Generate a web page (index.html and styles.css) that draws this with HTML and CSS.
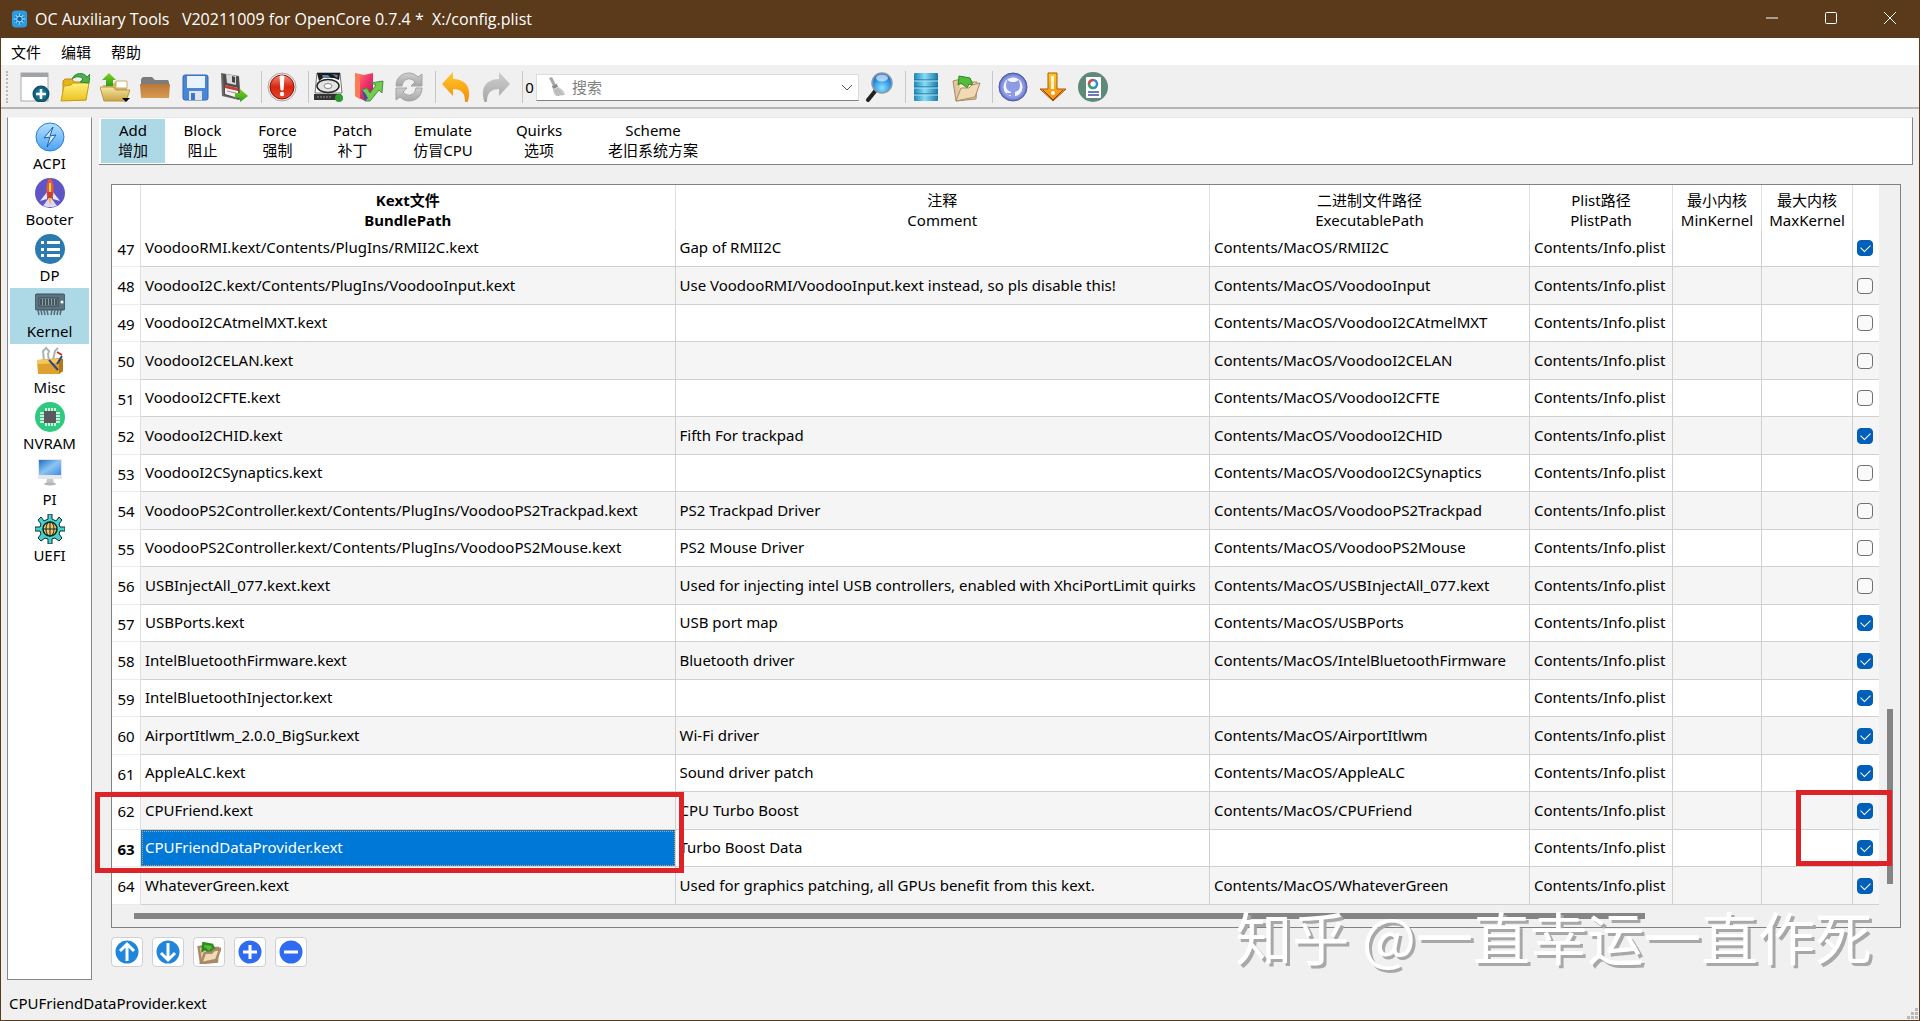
FILE: index.html
```
<!DOCTYPE html>
<html lang="zh-CN">
<head>
    <meta charset="UTF-8">
    <meta name="viewport" content="width=device-width, initial-scale=1.0">
    <title>OC Auxiliary Tools</title>
    <link rel="stylesheet" href="styles.css">
</head>
<body>
<svg class="defs" aria-hidden="true">
    <defs>
        <linearGradient id="gYellow" x1="0" y1="0" x2="0" y2="1"><stop offset="0" stop-color="#fff07a"/><stop offset="1" stop-color="#ecc11f"/></linearGradient>
        <linearGradient id="gTan" x1="0" y1="0" x2="0" y2="1"><stop offset="0" stop-color="#f6e6a4"/><stop offset="1" stop-color="#c9a444"/></linearGradient>
        <linearGradient id="gBrown" x1="0" y1="0" x2="0" y2="1"><stop offset="0" stop-color="#b9783a"/><stop offset="1" stop-color="#d99a52"/></linearGradient>
        <linearGradient id="gBlue" x1="0" y1="0" x2="0" y2="1"><stop offset="0" stop-color="#b5e0ff"/><stop offset="1" stop-color="#4aa3f5"/></linearGradient>
        <linearGradient id="gRed" x1="0" y1="0" x2="0" y2="1"><stop offset="0" stop-color="#f58a78"/><stop offset=".5" stop-color="#d9260f"/><stop offset="1" stop-color="#e8452c"/></linearGradient>
        <linearGradient id="gOrange" x1="0" y1="0" x2="0" y2="1"><stop offset="0" stop-color="#ffc928"/><stop offset="1" stop-color="#f58a0c"/></linearGradient>
        <linearGradient id="gGrey" x1="0" y1="0" x2="0" y2="1"><stop offset="0" stop-color="#cfcfcf"/><stop offset="1" stop-color="#a6a6a6"/></linearGradient>
        <linearGradient id="gDb" x1="0" y1="0" x2="1" y2="0"><stop offset="0" stop-color="#1f86b5"/><stop offset=".45" stop-color="#86dcf7"/><stop offset="1" stop-color="#1a78a8"/></linearGradient>
        <linearGradient id="gPink" x1="0" y1="0" x2="1" y2="1"><stop offset="0" stop-color="#ff8a5c"/><stop offset=".5" stop-color="#f0306c"/><stop offset="1" stop-color="#a01858"/></linearGradient>
        <linearGradient id="gGreen" x1="0" y1="0" x2="0" y2="1"><stop offset="0" stop-color="#7ed321"/><stop offset="1" stop-color="#2e9a1c"/></linearGradient>
        <linearGradient id="gScreen" x1="0" y1="0" x2="1" y2="1"><stop offset="0" stop-color="#1d6fc4"/><stop offset=".5" stop-color="#8cc4f2"/><stop offset="1" stop-color="#3d8ede"/></linearGradient>
        <radialGradient id="gTeal"><stop offset="0" stop-color="#2b9fc0"/><stop offset="1" stop-color="#0b4a66"/></radialGradient>
        <radialGradient id="gLens" cx=".5" cy=".75" r=".75"><stop offset="0" stop-color="#8be4ff"/><stop offset=".6" stop-color="#2a92e4"/><stop offset="1" stop-color="#1560b8"/></radialGradient>
        <radialGradient id="gHub"><stop offset="0" stop-color="#b4bff4"/><stop offset=".8" stop-color="#8a97e2"/><stop offset="1" stop-color="#5b66bb"/></radialGradient>
    </defs>
    <symbol id="openFolder" viewBox="0 0 30 30">
        <path d="M2 9l8-2 3 3 13 0-1 17-20 2z" fill="#e2c8a0" stroke="#a88a66"/>
        <path d="M9 13l18-2-3 10-16 7z" fill="#f6ead0"/>
        <path d="M8 4l11 2 3 7-4-1-2 4-6-5-3 2z" fill="#52bd36" stroke="#2c8a1c"/>
        <path d="M5 29l5-13 8 0 3-3 8-2-5 14z" fill="#f0dab6" stroke="#a88a66"/>
    </symbol>
</svg>

<div class="window">
    <header class="titlebar">
        <svg class="app-icon" viewBox="0 0 18 18"><rect x="1" y="0" width="16" height="18" rx="4" fill="#2c9be0"/><circle cx="9" cy="9" r="5" fill="#1273b8"/><path d="M9 3v12M3 9h12M5 5l8 8M13 5l-8 8" stroke="#7fd4ff" stroke-width="1.5"/><circle cx="9" cy="9" r="3" fill="#0f62a8" stroke="#a8e4ff"/></svg>
        <h1 class="title">OC Auxiliary Tools &nbsp; V20211009 for OpenCore 0.7.4 *&nbsp; X:/config.plist</h1>
        <div class="window-controls">
            <button type="button" aria-label="最小化"><svg viewBox="0 0 14 14"><path d="M1 7h12"/></svg></button>
            <button type="button" aria-label="最大化"><svg viewBox="0 0 14 14"><rect x="1.500" y="1.500" width="11" height="11" rx="1"/></svg></button>
            <button type="button" aria-label="关闭"><svg viewBox="0 0 14 14"><path d="M1 1l12 12M13 1L1 13"/></svg></button>
        </div>
    </header>

    <nav class="menubar">
        <button type="button">文件</button>
        <button type="button">编辑</button>
        <button type="button">帮助</button>
    </nav>

    <div class="toolbar">
        <span class="grip"></span>
        <button type="button" aria-label="新建"><svg viewBox="0 0 30 30"><rect x="1" y="1" width="27" height="28" fill="#fff" stroke="#a9a9a9"/><path d="M1 1h27v4H1z" fill="#a0a4a8"/><circle cx="21" cy="22" r="8.500" fill="url(#gTeal)"/><path d="M21 17v10M16 22h10" stroke="#fff" stroke-width="2.500"/></svg></button>
        <button type="button" aria-label="打开"><svg viewBox="0 0 30 30"><path d="M3 28V9l2-2h7l2 3h12v18z" fill="#e2b51d" stroke="#b98d10"/><path d="M1 29l3-15 7-1 2-2h16l-3 17z" fill="url(#gYellow)" stroke="#c79c16"/><path d="M12 7c3-7 12-7 15-2l3-3-1 9-9-1 3-3c-3-3-7-3-11 0z" fill="#49b04a" stroke="#2c8a3a"/></svg></button>
        <button type="button" aria-label="最近打开"><svg viewBox="0 0 30 30"><path d="M3 26V13h9l3-3h12v16z" fill="#d8b45a"/><path d="M16 9h11v7H16z" fill="#fff" stroke="#c9b070"/><path d="M0 15h13l3 3h14l-4 11H4z" fill="url(#gTan)" stroke="#b9963e"/><path d="M9 1l7 7h-3v6H6V8H2z" fill="url(#gGreen)"/><path d="M22 26h8l-4 4z" fill="#000"/></svg></button>
        <button type="button" aria-label="目录"><svg viewBox="0 0 30 30"><path d="M1 24V7l2-2h9l3 3h13l1 2v14z" fill="#7c7c7c"/><path d="M0 12h30l-1 14H1z" fill="url(#gBrown)"/></svg></button>
        <button type="button" aria-label="保存"><svg viewBox="0 0 30 30"><rect x="3" y="3" width="25" height="25" rx="2" fill="#4a86d8" stroke="#2f66b8"/><path d="M7 4h18v12H7z" fill="#eaf3fd"/><path d="M9 19h13v9H9z" fill="#dfe4ea"/><path d="M11 21h4v7h-4z" fill="#3b76c8"/></svg></button>
        <button type="button" aria-label="另存为"><svg viewBox="0 0 30 30"><path d="M1 1l18 3 2 23-2 1L2 24z" fill="#6a6a6a"/><path d="M3 2l16 3v22L4 23z" fill="#4e4e4e"/><path d="M6 2l10 2v9L7 11z" fill="#dadada"/><path d="M12 4l3 1v6l-3-1z" fill="#444"/><path d="M5 13l13 3v10L5 22z" fill="#f4f0f0"/><path d="M5 13l13 3v3L5 16z" fill="#c93a34"/><path d="M7 19l9 2" stroke="#999"/><path d="M15 21h5v-4l8 7-8 6v-4h-5z" fill="url(#gGreen)"/></svg></button>
        <span class="separator"></span>
        <button type="button" aria-label="检查"><svg viewBox="0 0 30 30"><circle cx="15" cy="15" r="14" fill="#e8e4e4" stroke="#b5a8a8"/><circle cx="15" cy="15" r="12" fill="url(#gRed)" stroke="#8a1408"/><path d="M13 4h4l-1 14h-2z" fill="#fff" stroke="#fff"/><circle cx="15" cy="22" r="2.200" fill="#fff"/></svg></button>
        <span class="separator"></span>
        <button type="button" aria-label="挂载 ESP"><svg viewBox="0 0 30 30"><path d="M3 1h23l2 20H1z" fill="#fafafa" stroke="#777"/><path d="M3 1h23l-1 7-5-2-11 0-4 3z" fill="#1c1c1c"/><path d="M8 3h6l3 3h-8zM18 2l6 1-1 3z" fill="#5f86a8"/><ellipse cx="14" cy="14" rx="11" ry="6.500" fill="#e4e4e4" stroke="#222" stroke-width="1.500"/><ellipse cx="14" cy="14" rx="4" ry="2.500" fill="#fff" stroke="#888"/><path d="M0 22h27v6H0z" fill="#333"/><path d="M3 25h2m1 0h2m1 0h2m1 0h2m1 0h2" stroke="#999"/><circle cx="25" cy="26" r="4" fill="#2e9a2e"/></svg></button>
        <button type="button" aria-label="校验"><svg viewBox="0 0 30 30"><path d="M1 1l9 2 9-2v24l-8 4L1 24z" fill="url(#gPink)"/><path d="M1 1l5 2v24l-5-3z" fill="#ff7a58"/><path d="M11 29l-3-11 5-2 3 5 6-8-5-2 12-2-1 12-3-3-9 11z" fill="#6fcf4a" stroke="#4a8a4a"/><path d="M11 29l-3-11 3 3 3 5z" fill="#5a3cae"/></svg></button>
        <button type="button" aria-label="刷新"><svg viewBox="0 0 30 30"><path d="M5 14H2C2 5 9 1 15 1c4 0 7 2 9 4l4-3v12H17l4-4c-5-6-12-3-13 4z" fill="url(#gGrey)" stroke="#a4a4a4"/><path d="M25 16h3c0 9-7 13-13 13-4 0-7-2-9-4l-4 3V16h11l-4 4c5 6 12 3 13-4z" fill="url(#gGrey)" stroke="#a4a4a4"/></svg></button>
        <span class="separator"></span>
        <button type="button" aria-label="撤销"><svg viewBox="0 0 30 30"><path d="M1 12L12 0v7c12 0 19 8 15 22-1 2-3 2-3 0 0-8-4-12-12-12v7z" fill="url(#gOrange)"/></svg></button>
        <button type="button" aria-label="重做" disabled><svg viewBox="0 0 30 30"><path d="M29 12L18 0v7C6 7-1 15 3 29c1 2 3 2 3 0 0-8 4-12 12-12v7z" fill="url(#gGrey)"/></svg></button>
        <span class="separator"></span>
        <span class="count">0</span>
        <div class="search">
            <svg class="broom" viewBox="0 0 20 20"><path d="M3 1l3-1 4 8-3 1z" fill="#a8a8a8"/><path d="M6 9l5-2 1 3-5 2z" fill="#8a8a8a"/><path d="M7 12l5-2c4 2 6 4 7 8l-9 1c-2-2-3-4-3-7z" fill="#c6c6c6"/><path d="M9 13l4 6M11 12l5 6" stroke="#aaa"/></svg>
            <input type="text" placeholder="搜索" aria-label="搜索">
            <button type="button" class="drop" aria-label="历史"><svg viewBox="0 0 12 12"><path d="M1 4l5 5 5-5" fill="none" stroke="#555"/></svg></button>
        </div>
        <button type="button" aria-label="查找"><svg viewBox="0 0 30 30"><path d="M12 18L4 28" stroke="#222" stroke-width="4" stroke-linecap="round"/><circle cx="18" cy="11" r="10" fill="url(#gLens)" stroke="#8a98a8" stroke-width="1.500"/><ellipse cx="18" cy="6" rx="6" ry="3.500" fill="#fff" opacity=".6"/></svg></button>
        <span class="separator"></span>
        <button type="button" aria-label="数据库"><svg viewBox="0 0 30 30"><rect x="3" y="1" width="24" height="28" rx="1" fill="url(#gDb)"/><path d="M3 8h24M3 15h24M3 22h24" stroke="#15648c"/><path d="M3 9h24M3 16h24M3 23h24" stroke="#a8e8fb"/></svg></button>
        <button type="button" aria-label="导出"><svg viewBox="0 0 30 30"><use href="#openFolder"/></svg></button>
        <span class="separator"></span>
        <button type="button" aria-label="GitHub"><svg viewBox="0 0 30 30"><circle cx="15" cy="15" r="14" fill="url(#gHub)" stroke="#4f5aa8"/><circle cx="15" cy="15" r="9.500" fill="#f4f6ff"/><path d="M9 8l4 2h4l4-2 1 5c0 5-2 6-5 7v6h-4v-3c-3 1-4-1-5-2l3 0 2 0v-1c-3-1-5-3-5-7z" fill="#8e9be6"/></svg></button>
        <button type="button" aria-label="更新"><svg viewBox="0 0 30 30"><path d="M10 1h9v16h9L15 29 2 17h8z" fill="url(#gOrange)" stroke="#a85a08"/><path d="M13 4h3v13h-3z" fill="#fff6d0"/><path d="M5 18l10 10 10-10" fill="none" stroke="#8a4608"/><circle cx="15" cy="21" r="2" fill="#fff"/></svg></button>
        <button type="button" aria-label="报告"><svg viewBox="0 0 30 30"><circle cx="15" cy="15" r="15" fill="#5f8a78"/><rect x="8" y="5" width="15" height="21" rx="1" fill="#fff"/><circle cx="15" cy="12" r="4" fill="none" stroke="#2f8ad0" stroke-width="2.500"/><path d="M11 12a4 4 0 0 1 4-4" fill="none" stroke="#e0483c" stroke-width="2.500"/><path d="M15 16a4 4 0 0 1-4-4" fill="none" stroke="#38a860" stroke-width="2.500"/><path d="M10 20h11M10 23h11" stroke="#3c50a0" stroke-width="1.500"/></svg></button>
    </div>

    <main class="main">
        <nav class="sidebar">
            <button type="button"><svg viewBox="0 0 30 30"><circle cx="15" cy="15" r="14" fill="url(#gBlue)" stroke="#2b7fd0"/><path d="M18 5l-9 11 6-1-3 10 9-12-6 1z" fill="#d8eeff" stroke="#1c5fa8"/></svg>ACPI</button>
            <button type="button"><svg viewBox="0 0 30 30"><circle cx="15" cy="15" r="15" fill="#5f55c4"/><path d="M12 14l-7 9 7-2zM18 14l7 9-7-2z" fill="#e8eaf6"/><path d="M15 0c4 4 4 10 3 19h-6c-1-9-1-15 3-19z" fill="#ea5b3a"/><path d="M12 14h6l-1 6h-4z" fill="#c9402c"/><path d="M15 5v9" stroke="#ffd54f" stroke-width="2"/><path d="M8 28l5-7h4l5 7-4 1h-6z" fill="#dcd8f4"/><path d="M13 20h4l-2 7z" fill="#ffb74d"/></svg>Booter</button>
            <button type="button"><svg viewBox="0 0 30 30"><circle cx="15" cy="15" r="15" fill="#2c7bb0"/><path d="M6 7h3v3H6zM12 7h13v3H12zM6 14h3v3H6zM12 14h13v3H12zM6 20h3v3H6zM12 20h13v3H12z" fill="#fff"/></svg>DP</button>
            <button type="button" class="active"><svg viewBox="0 0 30 30"><rect x="0" y="4" width="30" height="16" rx="2" fill="#5c7480" stroke="#3a4c56"/><rect x="4" y="8" width="19" height="8" fill="#8fa4ae" stroke="#33444c"/><path d="M6 9v6m3-6v6m3-6v6m3-6v6m3-6v6m3-6v6" stroke="#2a383f" stroke-width="1.500"/><circle cx="27" cy="12" r="1.500" fill="#fff"/><path d="M3 20l1 5m2-5l1 5m2-5l1 5m2-5l1 5m4-5l-1 5m4-5l-1 5m4-5l-1 5m4-5l-1 5" stroke="#566a74" stroke-width="1.500"/></svg>Kernel</button>
            <button type="button"><svg viewBox="0 0 30 30"><path d="M9 15L8 5l3-3 3 3-1 3 1 7M18 14l2-9 3-3" fill="none" stroke="#a8b4b4" stroke-width="2"/><path d="M2 14l22-2 4 1v12l-4 3H3z" fill="#e0a030"/><path d="M2 14l22-1v4L2 18z" fill="#f5ca5c"/><path d="M24 12l4 1v12l-4 3z" fill="#b87818"/><path d="M14 14l9 10M27 10l-5 8" stroke="#274a80" stroke-width="2"/><path d="M22 6l5 3" stroke="#c03020" stroke-width="2"/></svg>Misc</button>
            <button type="button"><svg viewBox="0 0 30 30"><circle cx="15" cy="15" r="15" fill="#2fc980"/><path d="M11 6v18m3-18v18m3-18v18m3-18v18M5 11h20M5 14h20M5 17h20M5 20h20" stroke="#fff" stroke-width="1.500"/><rect x="9" y="9" width="12" height="12" fill="#5a5a5e"/></svg>NVRAM</button>
            <button type="button"><svg viewBox="0 0 30 30"><path d="M3 1h24v20H3z" fill="#e4e8ec"/><path d="M4 2h22v15H4z" fill="url(#gScreen)"/><path d="M12 21h6l1 4h-8z" fill="#c4c8cc"/><ellipse cx="15" cy="26" rx="6" ry="1.500" fill="#b0b4b8"/></svg>PI</button>
            <button type="button"><svg viewBox="0 0 30 30"><path d="M13 0h4v5l4 2 3-4 3 3-3 4 1 3h5v4h-5l-1 3 3 4-3 3-4-3-3 1v5h-4v-5l-3-1-4 3-3-3 3-4-1-3H0v-4h5l1-3-3-4 3-3 3 4 4-2z" fill="#45d3cc" stroke="#15282c"/><circle cx="15" cy="15" r="7" fill="#f4c860" stroke="#15282c" stroke-width="1.500"/><path d="M15 8v14M8 15h14" stroke="#15282c"/><ellipse cx="15" cy="15" rx="4" ry="7" fill="none" stroke="#15282c"/></svg>UEFI</button>
        </nav>

        <section class="content">
            <div class="tabs">
                <button type="button" class="active">Add<br>增加</button>
                <button type="button">Block<br>阻止</button>
                <button type="button">Force<br>强制</button>
                <button type="button">Patch<br>补丁</button>
                <button type="button" class="wide">Emulate<br>仿冒CPU</button>
                <button type="button" class="medium">Quirks<br>选项</button>
                <button type="button" class="wider">Scheme<br>老旧系统方案</button>
            </div>

            <div class="panel">
                <div class="frame">
                    <table class="kexts">
                        <colgroup>
                            <col class="c-num"><col><col><col class="c-exec"><col class="c-plist"><col class="c-min"><col class="c-max"><col class="c-check">
                        </colgroup>
                        <thead>
                            <tr>
                                <th></th>
                                <th class="sorted">Kext文件<br>BundlePath</th>
                                <th>注释<br>Comment</th>
                                <th>二进制文件路径<br>ExecutablePath</th>
                                <th>Plist路径<br>PlistPath</th>
                                <th>最小内核<br>MinKernel</th>
                                <th>最大内核<br>MaxKernel</th>
                                <th></th>
                            </tr>
                        </thead>
                        <tbody>
                            <tr><th>47</th><td>VoodooRMI.kext/Contents/PlugIns/RMII2C.kext</td><td>Gap of RMII2C</td><td>Contents/MacOS/RMII2C</td><td>Contents/Info.plist</td><td></td><td></td><td><input type="checkbox" aria-label="47" checked></td></tr>
                            <tr><th>48</th><td>VoodooI2C.kext/Contents/PlugIns/VoodooInput.kext</td><td>Use VoodooRMI/VoodooInput.kext instead, so pls disable this!</td><td>Contents/MacOS/VoodooInput</td><td>Contents/Info.plist</td><td></td><td></td><td><input type="checkbox" aria-label="48"></td></tr>
                            <tr><th>49</th><td>VoodooI2CAtmelMXT.kext</td><td></td><td>Contents/MacOS/VoodooI2CAtmelMXT</td><td>Contents/Info.plist</td><td></td><td></td><td><input type="checkbox" aria-label="49"></td></tr>
                            <tr><th>50</th><td>VoodooI2CELAN.kext</td><td></td><td>Contents/MacOS/VoodooI2CELAN</td><td>Contents/Info.plist</td><td></td><td></td><td><input type="checkbox" aria-label="50"></td></tr>
                            <tr><th>51</th><td>VoodooI2CFTE.kext</td><td></td><td>Contents/MacOS/VoodooI2CFTE</td><td>Contents/Info.plist</td><td></td><td></td><td><input type="checkbox" aria-label="51"></td></tr>
                            <tr><th>52</th><td>VoodooI2CHID.kext</td><td>Fifth For trackpad</td><td>Contents/MacOS/VoodooI2CHID</td><td>Contents/Info.plist</td><td></td><td></td><td><input type="checkbox" aria-label="52" checked></td></tr>
                            <tr><th>53</th><td>VoodooI2CSynaptics.kext</td><td></td><td>Contents/MacOS/VoodooI2CSynaptics</td><td>Contents/Info.plist</td><td></td><td></td><td><input type="checkbox" aria-label="53"></td></tr>
                            <tr><th>54</th><td>VoodooPS2Controller.kext/Contents/PlugIns/VoodooPS2Trackpad.kext</td><td>PS2 Trackpad Driver</td><td>Contents/MacOS/VoodooPS2Trackpad</td><td>Contents/Info.plist</td><td></td><td></td><td><input type="checkbox" aria-label="54"></td></tr>
                            <tr><th>55</th><td>VoodooPS2Controller.kext/Contents/PlugIns/VoodooPS2Mouse.kext</td><td>PS2 Mouse Driver</td><td>Contents/MacOS/VoodooPS2Mouse</td><td>Contents/Info.plist</td><td></td><td></td><td><input type="checkbox" aria-label="55"></td></tr>
                            <tr><th>56</th><td>USBInjectAll_077.kext.kext</td><td>Used for injecting intel USB controllers, enabled with XhciPortLimit quirks</td><td>Contents/MacOS/USBInjectAll_077.kext</td><td>Contents/Info.plist</td><td></td><td></td><td><input type="checkbox" aria-label="56"></td></tr>
                            <tr><th>57</th><td>USBPorts.kext</td><td>USB port map</td><td>Contents/MacOS/USBPorts</td><td>Contents/Info.plist</td><td></td><td></td><td><input type="checkbox" aria-label="57" checked></td></tr>
                            <tr><th>58</th><td>IntelBluetoothFirmware.kext</td><td>Bluetooth driver</td><td>Contents/MacOS/IntelBluetoothFirmware</td><td>Contents/Info.plist</td><td></td><td></td><td><input type="checkbox" aria-label="58" checked></td></tr>
                            <tr><th>59</th><td>IntelBluetoothInjector.kext</td><td></td><td></td><td>Contents/Info.plist</td><td></td><td></td><td><input type="checkbox" aria-label="59" checked></td></tr>
                            <tr><th>60</th><td>AirportItlwm_2.0.0_BigSur.kext</td><td>Wi-Fi driver</td><td>Contents/MacOS/AirportItlwm</td><td>Contents/Info.plist</td><td></td><td></td><td><input type="checkbox" aria-label="60" checked></td></tr>
                            <tr><th>61</th><td>AppleALC.kext</td><td>Sound driver patch</td><td>Contents/MacOS/AppleALC</td><td>Contents/Info.plist</td><td></td><td></td><td><input type="checkbox" aria-label="61" checked></td></tr>
                            <tr><th>62</th><td>CPUFriend.kext</td><td>CPU Turbo Boost</td><td>Contents/MacOS/CPUFriend</td><td>Contents/Info.plist</td><td></td><td></td><td><input type="checkbox" aria-label="62" checked></td></tr>
                            <tr class="current"><th>63</th><td class="selected">CPUFriendDataProvider.kext</td><td>Turbo Boost Data</td><td></td><td>Contents/Info.plist</td><td></td><td></td><td><input type="checkbox" aria-label="63" checked></td></tr>
                            <tr><th>64</th><td>WhateverGreen.kext</td><td>Used for graphics patching, all GPUs benefit from this kext.</td><td>Contents/MacOS/WhateverGreen</td><td>Contents/Info.plist</td><td></td><td></td><td><input type="checkbox" aria-label="64" checked></td></tr>
                        </tbody>
                    </table>
                    <div class="scroll-v"><span class="thumb"></span></div>
                    <div class="scroll-h"><span class="thumb"></span></div>
                    <span class="mark mark-left"></span>
                    <span class="mark mark-right"></span>
                    <div class="watermark">知乎 @一直幸运一直作死</div>
                </div>

                <div class="actions">
                    <button type="button" aria-label="上移"><svg viewBox="0 0 26 26"><circle cx="13" cy="13" r="13" fill="#1f86dc"/><path d="M13 22V5M6 12l7-7 7 7"/></svg></button>
                    <button type="button" aria-label="下移"><svg viewBox="0 0 26 26"><circle cx="13" cy="13" r="13" fill="#1f86dc"/><path d="M13 4v17M6 14l7 7 7-7"/></svg></button>
                    <button type="button" aria-label="打开目录"><svg class="folder" viewBox="0 0 30 30"><use href="#openFolder"/></svg></button>
                    <button type="button" aria-label="添加"><svg viewBox="0 0 26 26"><circle cx="13" cy="13" r="13" fill="#2f6bf0"/><path d="M13 6v14M6 13h14"/></svg></button>
                    <button type="button" aria-label="删除"><svg viewBox="0 0 26 26"><circle cx="13" cy="13" r="13" fill="#2f6bf0"/><path d="M6 13h14"/></svg></button>
                </div>
            </div>
        </section>
    </main>

    <footer class="statusbar">
        <span>CPUFriendDataProvider.kext</span>
        <svg class="size-grip" viewBox="0 0 12 12"><path d="M8 0h3v3H8zM4 4h3v3H4zM8 4h3v3H8zM0 8h3v3H0zM4 8h3v3H4zM8 8h3v3H8z" fill="#b8b8b8"/></svg>
    </footer>
</div>
</body>
</html>
```

FILE: styles.css
```
* {
    box-sizing: border-box;
}

body {
    margin: 0;
    font-family: "Noto Sans", "Noto Sans CJK SC", sans-serif;
    font-size: 15px;
    color: #000;
    background-color: #5a3a1a;
}

button,
input {
    font: inherit;
    color: inherit;
}

button {
    padding: 0;
    border: none;
    background: none;
}

.defs {
    position: absolute;
    width: 0;
    height: 0;
}

.window {
    display: flex;
    flex-direction: column;
    min-height: 100vh;
    border: 1px solid #5a3a1a;
    border-top: none;
    background-color: #f0f0f0;
}

/* title bar */
.titlebar {
    display: flex;
    align-items: center;
    height: 38px;
    padding-left: 10px;
    color: #fff;
    background-color: #5a3a1a;
}

.app-icon {
    width: 17px;
    height: 18px;
}

.title {
    flex: 1;
    margin: 0 0 0 7px;
    font-family: "Open Sans", sans-serif;
    font-size: 16px;
    font-weight: normal;
}

.window-controls {
    display: flex;
}

.window-controls button {
    width: 59px;
    height: 38px;
}

.window-controls svg {
    width: 14px;
    height: 14px;
    fill: none;
    stroke: #fff;
}

/* menu */
.menubar {
    display: flex;
    gap: 20px;
    height: 27px;
    padding-left: 10px;
    background-color: #fff;
}

/* toolbar */
.toolbar {
    display: flex;
    align-items: center;
    height: 44px;
    padding: 2px 0 0 5px;
    border-bottom: 2px solid #b5b5b5;
}

.toolbar > button {
    width: 40px;
    height: 30px;
}

.toolbar > button svg {
    display: block;
    width: 30px;
    height: 30px;
    margin: 0 auto;
}

.grip {
    width: 9px;
    height: 32px;
    border-left: 2px dotted #b8b8b8;
}

.separator {
    width: 7px;
    height: 32px;
    border-right: 1px solid #c8c8c8;
}

.count {
    width: 13px;
    text-align: center;
}

.search {
    display: flex;
    align-items: center;
    width: 323px;
    height: 27px;
    padding: 0 5px 0 9px;
    border: 1px solid #dcdcdc;
    border-bottom-color: #808080;
    background-color: #fff;
}

.broom {
    width: 20px;
    height: 20px;
}

.search input {
    flex: 1;
    min-width: 0;
    padding: 0 6px;
    border: none;
    background: none;
    outline: none;
}

.search input::placeholder {
    color: #808080;
}

.drop svg {
    display: block;
    width: 12px;
    height: 12px;
}

/* main area */
.main {
    display: flex;
    flex: 1;
    gap: 7px;
    padding: 8px 6px 0;
}

.sidebar {
    display: flex;
    flex-direction: column;
    width: 85px;
    padding: 2px;
    border: 1px solid #828790;
    border-top-color: #f8f8f8;
    background-color: #fff;
}

.sidebar button {
    height: 56px;
    line-height: 22px;
}

.sidebar svg {
    display: block;
    width: 30px;
    height: 30px;
    margin: 0 auto;
}

.sidebar .active,
.tabs .active {
    background-color: #add8e6;
}

.content {
    flex: 1;
    min-width: 0;
}

.tabs {
    display: flex;
    height: 48px;
    padding: 1px 1px 1px 2px;
    border: 1px solid #828282;
    border-top-color: #e8e8e8;
    border-left: none;
    background-color: #fff;
}

.tabs button {
    width: 75px;
    padding-bottom: 3px;
    line-height: 20px;
}

.tabs .active {
    width: 64px;
}

.tabs .medium {
    width: 86px;
}

.tabs .wide {
    width: 106px;
}

.tabs .wider {
    width: 142px;
}

.panel {
    padding: 19px 12px 0;
}

/* table */
.frame {
    position: relative;
    display: grid;
    grid-template-columns: 1fr 21px;
    border: 1px solid #828282;
}

.kexts {
    width: 100%;
    table-layout: fixed;
    border-spacing: 0;
    background-color: #fff;
}

.c-num {
    width: 29px;
}

.c-exec {
    width: 320px;
}

.c-plist {
    width: 143px;
}

.c-min {
    width: 89px;
}

.c-max {
    width: 91px;
}

.c-check {
    width: 26px;
}

.kexts th,
.kexts td {
    padding: 0 0 0 4px;
    line-height: 20px;
    white-space: nowrap;
    border-right: 1px solid #d0d0d0;
}

.kexts td:not(:last-child) {
    padding-bottom: 2px;
}

.kexts th {
    padding: 0;
    font-weight: normal;
    border-right-color: #e0e0e0;
}

.kexts thead th {
    height: 45px;
    padding-top: 5px;
}

.kexts .sorted,
.current th {
    font-weight: bold;
}

.kexts tbody tr {
    height: 37px;
}

.kexts tbody tr:nth-child(even) {
    height: 38px;
}

.kexts tbody th {
    padding-top: 1px;
    border-bottom: 1px solid #ececec;
}

.kexts tbody td {
    border-bottom: 1px solid #d0d0d0;
}

.kexts tr:nth-child(even) td {
    background-color: #f5f5f5;
}

.kexts th:last-child,
.kexts td:last-child {
    border-right: none;
}

.kexts .current .selected {
    color: #fff;
    background-color: #0078d7;
    outline: 1px dotted #d8a060;
    outline-offset: -2px;
}

.kexts input {
    display: block;
    position: relative;
    width: 16px;
    height: 16px;
    margin: 0;
    appearance: none;
    border: 1px solid #707070;
    border-radius: 4px;
    background-color: #fafafa;
}

.kexts input:checked {
    border-color: #005fb8;
    background-color: #005fb8;
}

.kexts input:checked::after {
    content: "";
    position: absolute;
    top: 3px;
    left: 3px;
    width: 8px;
    height: 5px;
    border: solid #fff;
    border-width: 0 0 1px 1px;
    transform: rotate(-45deg);
}

/* scroll bars */
.scroll-v {
    display: flex;
    flex-direction: column;
    justify-content: flex-end;
    align-items: center;
    padding-bottom: 21px;
}

.scroll-v .thumb {
    width: 6px;
    height: 25%;
    background-color: #858585;
}

.scroll-h {
    display: flex;
    align-items: center;
    height: 22px;
    padding-left: 22px;
}

.scroll-h .thumb {
    width: calc(100% - 234px);
    height: 6px;
    background-color: #858585;
}

/* marks over the table */
.mark {
    position: absolute;
    border: 5px solid #dc2328;
    pointer-events: none;
}

.mark-left {
    left: -17px;
    bottom: 54px;
    width: 589px;
    height: 81px;
}

.mark-right {
    right: 8px;
    bottom: 61px;
    width: 96px;
    height: 76px;
}

.watermark {
    position: absolute;
    right: 28px;
    bottom: -48px;
    font-family: "Noto Sans CJK SC", sans-serif;
    font-size: 57px;
    line-height: 80px;
    color: #fff;
    text-shadow: 3px 3px 0 #a8a8a8;
    white-space: nowrap;
    pointer-events: none;
}

/* row buttons */
.actions {
    display: flex;
    gap: 9px;
    padding-top: 9px;
}

.actions button {
    display: flex;
    align-items: center;
    justify-content: center;
    width: 32px;
    height: 30px;
    border: 1px solid #d0d0d0;
    border-radius: 4px;
    background-color: #fdfdfd;
}

.actions svg {
    width: 26px;
    height: 26px;
    fill: none;
    stroke: #fff;
    stroke-width: 3;
}

.actions .folder {
    width: 24px;
    height: 24px;
    stroke: none;
}

/* status bar */
.statusbar {
    display: flex;
    align-items: center;
    justify-content: space-between;
    height: 40px;
    padding: 6px 0 0 8px;
}

.size-grip {
    width: 12px;
    height: 12px;
    align-self: flex-end;
}
```
